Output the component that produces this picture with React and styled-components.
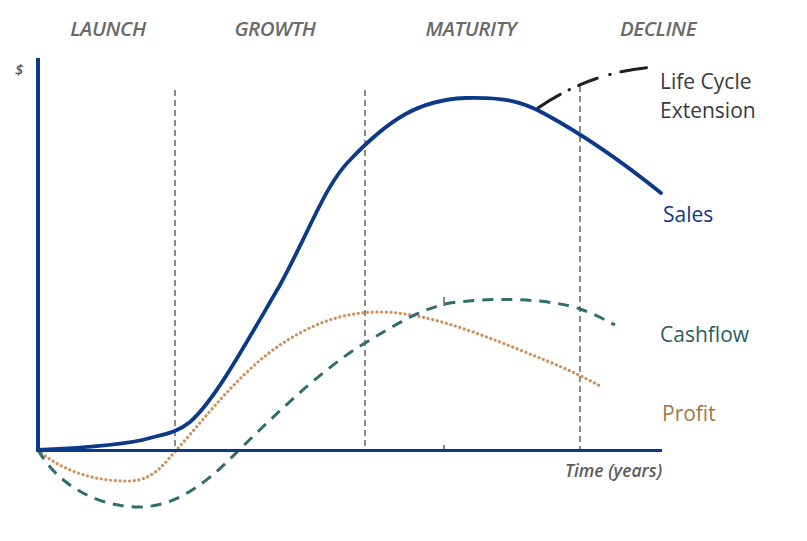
import React from 'react'
import styled, { createGlobalStyle } from 'styled-components'

const NAVY = '#0c3a88'
const TEAL = '#2f6e6c'
const TAN = '#cf935f'
const GUIDE = '#5a5a5a'

const stages = [
  { name: 'LAUNCH', width: 140 },
  { name: 'GROWTH', width: 194 },
  { name: 'MATURITY', width: 198 },
  { name: 'DECLINE', width: 176 },
]

const guides = [
  { x: 175, top: 90 },
  { x: 365, top: 90 },
  { x: 580, top: 86 },
]

const curves = {
  sales:
    'M38,450 C80,448 130,444 150,438 C165,434 178,432 190,422 C215,400 245,345 280,285 C310,230 325,185 350,160 C390,118 420,100 465,98 C500,97 520,100 545,114 C580,133 620,160 661,193',
  extension: 'M538,108 Q590,72 654,67',
  profit:
    'M38,450 C60,470 95,482 130,481 C155,480 165,462 180,446 C205,418 240,372 280,345 C310,325 340,313 375,312 C420,311 470,330 520,350 C550,362 575,372 600,386',
  cashflow:
    'M38,450 C55,480 90,505 135,507 C170,508 200,490 237,452 C270,420 320,370 365,343 C395,325 420,309 450,303 C500,296 555,300 580,309 C595,314 605,320 615,325',
}

const legend = [
  { lines: ['Life Cycle', 'Extension'], x: 660, y: 89, color: '#3a3a3a' },
  { lines: ['Sales'], x: 663, y: 222, color: NAVY },
  { lines: ['Cashflow'], x: 660, y: 342, color: '#2d5e5d' },
  { lines: ['Profit'], x: 662, y: 421, color: '#a5773f' },
]

function App() {
  return (
    <Page>
      <GlobalStyle />
      <StageRow>
        {stages.map(s => (
          <StageLabel key={s.name} width={s.width}>
            {s.name}
          </StageLabel>
        ))}
      </StageRow>
      <Chart viewBox="0 56 807 485" width="807" height="485">
        {guides.map(g => (
          <line
            key={g.x}
            x1={g.x}
            x2={g.x}
            y1={g.top}
            y2={450}
            stroke={GUIDE}
            strokeWidth="1.4"
            strokeDasharray="6 4"
          />
        ))}
        <line x1="444" x2="444" y1="297" y2="306" stroke={GUIDE} strokeWidth="1.4" />
        <line x1="444" x2="444" y1="445" y2="450" stroke={GUIDE} strokeWidth="1.4" />

        <path
          d={curves.profit}
          fill="none"
          stroke={TAN}
          strokeWidth="3.2"
          strokeLinecap="round"
          strokeDasharray="0.1 4.6"
        />
        <path
          d={curves.cashflow}
          fill="none"
          stroke={TEAL}
          strokeWidth="3"
          strokeDasharray="11 8"
        />
        <path
          d={curves.extension}
          fill="none"
          stroke="#1f1f24"
          strokeWidth="3"
          strokeLinecap="round"
          strokeDasharray="26 10 0.5 10 20 13 0.5 11 26"
        />
        <path d={curves.sales} fill="none" stroke={NAVY} strokeWidth="3.8" strokeLinecap="round" />

        <line x1="38" x2="38" y1="58" y2="452" stroke={NAVY} strokeWidth="4" />
        <line x1="36" x2="662" y1="450.5" y2="450.5" stroke={NAVY} strokeWidth="3" />

        <AxisNote x="15" y="75" size={15}>$</AxisNote>
        <AxisNote x="565" y="477" size={17.5}>Time (years)</AxisNote>

        {legend.map(item => (
          <Legend key={item.lines[0]} x={item.x} y={item.y} tone={item.color}>
            {item.lines.map((line, i) => (
              <tspan key={line} x={item.x} dy={i === 0 ? 0 : 29}>
                {line}
              </tspan>
            ))}
          </Legend>
        ))}
      </Chart>
    </Page>
  )
}

const GlobalStyle = createGlobalStyle`
  html, body {
    margin: 0;
    padding: 0;
    background: #ffffff;
  }
`

const Page = styled.div`
  width: 807px;
  height: 541px;
  overflow: hidden;
  background: #ffffff;
  font-family: 'Open Sans', 'Noto Sans', sans-serif;
`

const StageRow = styled.div`
  display: flex;
  height: 56px;
  padding-left: 38px;
  box-sizing: border-box;
  align-items: flex-start;
`

const StageLabel = styled.div`
  width: ${props => props.width}px;
  padding-top: 18px;
  line-height: 1;
  text-align: center;
  font-size: 20.5px;
  font-weight: 600;
  font-style: italic;
  letter-spacing: -0.4px;
  color: #6a6a6a;
`

const Chart = styled.svg`
  display: block;
`

const AxisNote = styled.text`
  font-family: 'Open Sans', 'Noto Sans', sans-serif;
  font-size: ${props => props.size}px;
  font-weight: 600;
  font-style: italic;
  fill: #5c5c5c;
`

const Legend = styled.text`
  font-family: 'Open Sans', 'Noto Sans', sans-serif;
  font-size: 21px;
  fill: ${props => props.tone};
`

export default App
